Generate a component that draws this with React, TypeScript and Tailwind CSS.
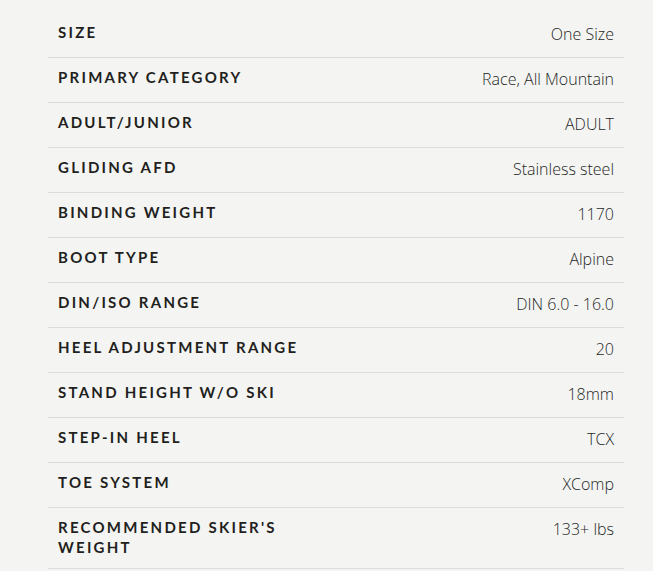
import React from "react";

const rows: [string, string][] = [
  ["SIZE", "One Size"],
  ["PRIMARY CATEGORY", "Race, All Mountain"],
  ["ADULT/JUNIOR", "ADULT"],
  ["GLIDING AFD", "Stainless steel"],
  ["BINDING WEIGHT", "1170"],
  ["BOOT TYPE", "Alpine"],
  ["DIN/ISO RANGE", "DIN 6.0 - 16.0"],
  ["HEEL ADJUSTMENT RANGE", "20"],
  ["STAND HEIGHT W/O SKI", "18mm"],
  ["STEP-IN HEEL", "TCX"],
  ["TOE SYSTEM", "XComp"],
  ["RECOMMENDED SKIER'S WEIGHT", "133+ lbs"],
];

export default function App() {
  return (
    <div className="min-h-[571px] w-full bg-[#f4f5f3] pt-[13px]">
      <div className="ml-[48px] w-[576px]">
        {rows.map(([label, value]) => (
          <div key={label} className="grid grid-cols-2 border-b border-[#dcdcdc] pt-[9px] pb-[11px]">
            <div
              className="pl-[10px] pr-[10px] text-[15px] font-bold leading-[20px] tracking-[0.15em] text-[#231f20]"
              style={{ fontFamily: "Lato, sans-serif" }}
            >
              {label}
            </div>
            <div
              className="pr-[10px] text-right text-[16px] font-light leading-[24px] text-[#1f1f1f]"
              style={{ fontFamily: "'Open Sans', sans-serif" }}
            >
              {value}
            </div>
          </div>
        ))}
      </div>
    </div>
  );
}
